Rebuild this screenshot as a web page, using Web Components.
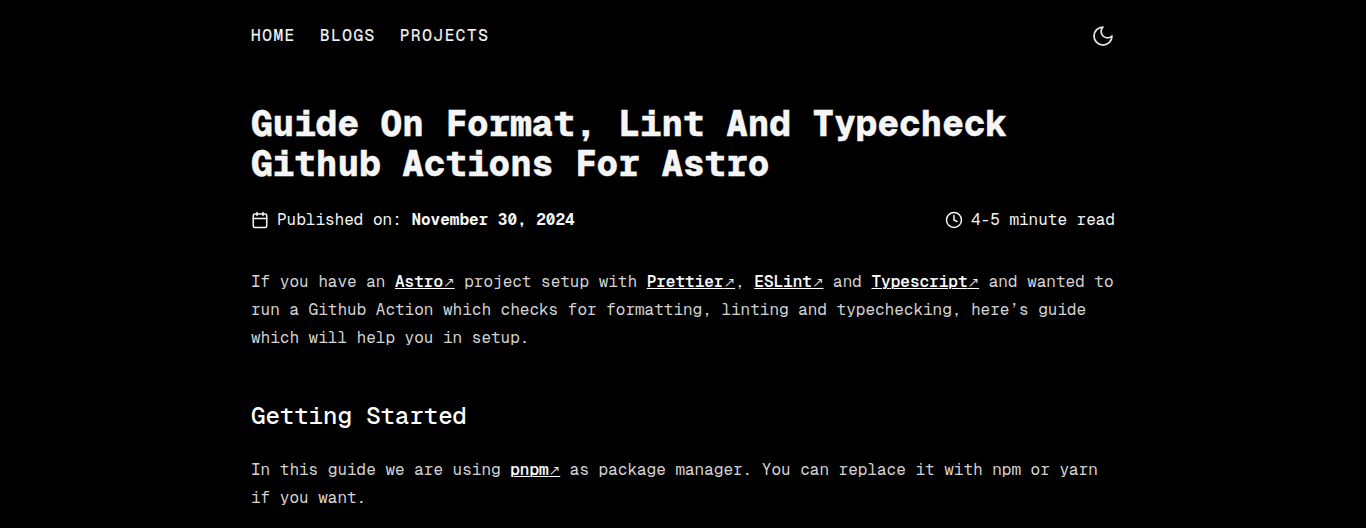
<!DOCTYPE html>
<html lang="en">
<head>
<meta charset="utf-8">
<title>Guide On Format, Lint And Typecheck Github Actions For Astro</title>
<style>
html,body{margin:0;background:#000;height:528px;overflow:hidden}
body{font:16px/28px "Geist Mono","DejaVu Sans Mono","Liberation Mono",monospace;color:#d4d4d4}
</style>
</head>
<body>
<blog-page></blog-page>
<script>
const define = (name, html) => customElements.define(name, class extends HTMLElement {
  constructor() {
    super();
    const t = document.createElement('template');
    t.innerHTML = html;
    this.attachShadow({mode: 'open'}).append(t.content.cloneNode(true));
  }
});

define('nav-link', `<style>
:host{display:block}
a{display:block;color:#f5f5f5;text-decoration:none;-webkit-text-stroke:.2px #f5f5f5;letter-spacing:.1em;line-height:24px}
</style><a href="#"><slot></slot></a>`);

define('site-header', `<style>
:host{display:flex;justify-content:space-between;align-items:center;height:72px}
nav{display:flex;gap:24px}
button{display:flex;border:0;background:none;padding:0;color:#e5e5e5}
</style>
<nav><nav-link>HOME</nav-link><nav-link>BLOGS</nav-link><nav-link>PROJECTS</nav-link></nav>
<button aria-label="Toggle theme"><svg width="24" height="24" viewBox="0 0 24 24" fill="none" stroke="currentColor" stroke-width="1.75" stroke-linecap="round" stroke-linejoin="round"><path d="M12 3a6 6 0 0 0 9 9 9 9 0 1 1-9-9Z"/></svg></button>`);

define('post-title', `<style>
:host{display:block}
h1{margin:0;font-size:36px;line-height:40px;font-weight:800;color:#f5f5f5;-webkit-text-stroke:.3px #f5f5f5}
</style><h1><slot></slot></h1>`);

define('meta-item', `<style>
:host{display:flex;align-items:center;gap:8px;line-height:24px;color:#f5f5f5}
::slotted(svg){flex:none}
</style><slot name="icon"></slot><span><slot></slot></span>`);

define('post-meta', `<style>
:host{display:flex;justify-content:space-between;margin-top:24px}
svg{fill:none;stroke:currentColor;stroke-width:2;stroke-linecap:round;stroke-linejoin:round}
b{font-weight:700}
</style>
<meta-item><svg slot="icon" width="18" height="18" viewBox="0 0 24 24"><path d="M8 2v4M16 2v4M3 10h18"/><rect x="3" y="4" width="18" height="18" rx="2"/></svg>Published on: <b>November 30, 2024</b></meta-item>
<meta-item><svg slot="icon" width="18" height="18" viewBox="0 0 24 24"><circle cx="12" cy="12" r="10"/><path d="M12 6v6l4 2"/></svg>4-5 minute read</meta-item>`);

define('ext-link', `<style>
:host{display:inline}
a{color:#fff;font-weight:500;-webkit-text-stroke:.15px #fff;text-decoration:underline;text-decoration-thickness:1px;text-underline-offset:1px}
span{font-family:"DejaVu Sans Light","DejaVu Sans",sans-serif;font-size:13.85px;font-weight:200;line-height:1}
</style><a href="#"><slot></slot><span>↗</span></a>`);

define('post-text', `<style>:host{display:block}p{margin:0}</style><p><slot></slot></p>`);

define('post-heading', `<style>
:host{display:block;margin:48px 0 24px}
h2{margin:0;font-size:24px;line-height:32px;font-weight:500;color:#fff}
</style><h2><slot></slot></h2>`);

define('blog-page', `<style>
:host{display:block;width:864px;margin:0 auto}
main{padding-top:32px}
article{margin-top:36px}
</style>
<site-header></site-header>
<main>
<post-title>Guide On Format, Lint And Typecheck Github Actions For Astro</post-title>
<post-meta></post-meta>
<article>
<post-text>If you have an <ext-link>Astro</ext-link> project setup with <ext-link>Prettier</ext-link>, <ext-link>ESLint</ext-link> and <ext-link>Typescript</ext-link> and wanted to run a Github Action which checks for formatting, linting and typechecking, here’s guide which will help you in setup.</post-text>
<post-heading>Getting Started</post-heading>
<post-text>In this guide we are using <ext-link>pnpm</ext-link> as package manager. You can replace it with npm or yarn if you want.</post-text>
</article>
</main>`);
</script>
</body>
</html>
